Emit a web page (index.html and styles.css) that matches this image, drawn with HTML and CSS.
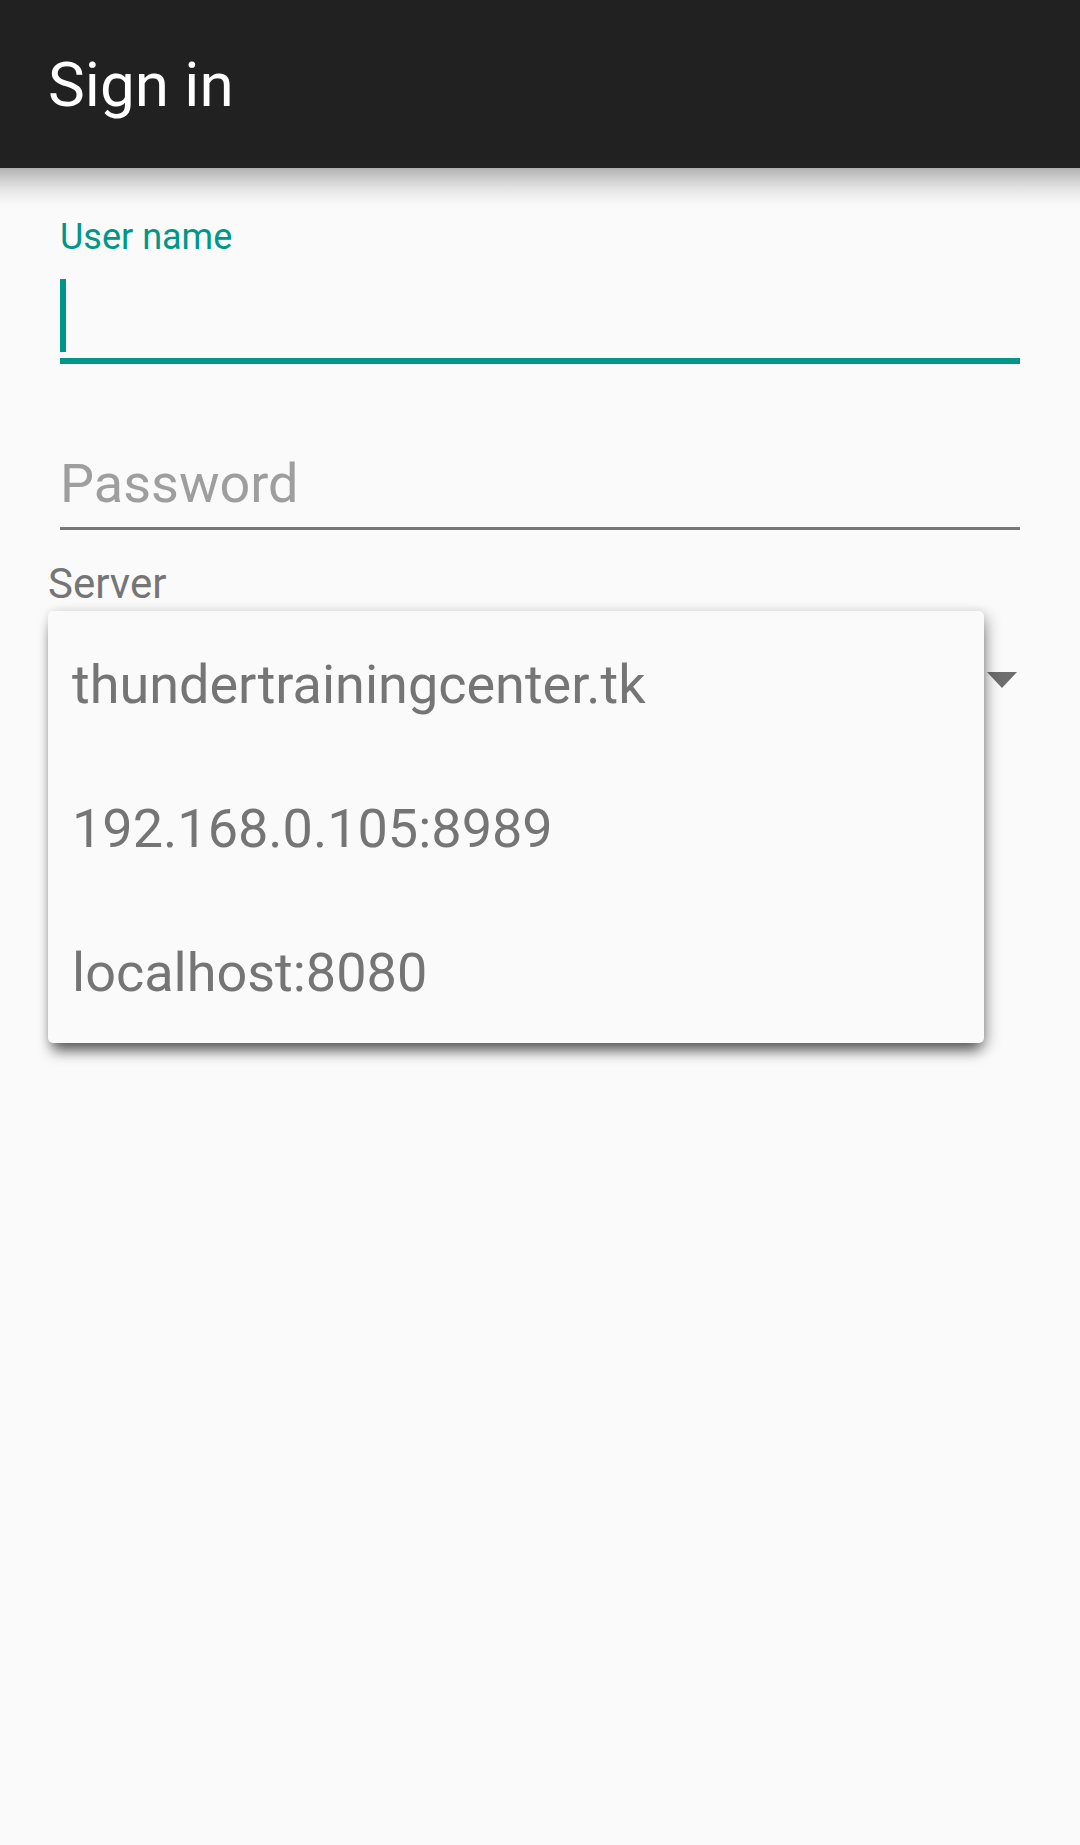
FILE: index.html
```html
<!DOCTYPE html>
<html lang="en">
<head>
<meta charset="utf-8">
<title>Sign in</title>
<link rel="stylesheet" href="styles.css">
</head>
<body>
<header class="appbar">
  <h1 class="title">Sign in</h1>
</header>
<main class="form">
  <label class="float-label">User name</label>
  <div class="field focused">
    <div class="cursor"></div>
  </div>
  <div class="field pw">
    <span class="hint">Password</span>
  </div>
  <div class="server-label">Server</div>
  <div class="spinner">
    <span class="spinner-value"></span>
    <span class="arrow"></span>
    <ul class="dropdown">
      <li class="item">thundertrainingcenter.tk</li>
      <li class="item">192.168.0.105:8989</li>
      <li class="item">localhost:8080</li>
    </ul>
  </div>
</main>
</body>
</html>
```
FILE: styles.css
```css
* { box-sizing: border-box; }
html, body {
  margin: 0;
  padding: 0;
  background: #fafafa;
  font-family: Roboto, "Noto Sans", "Liberation Sans", sans-serif;
  width: 1080px;
  height: 1845px;
  overflow: hidden;
}
.appbar {
  position: relative;
  z-index: 2;
  height: 168px;
  background: #212121;
  padding: 3px 0 0 48px;
}
.appbar::after {
  content: "";
  position: absolute;
  left: 0;
  right: 0;
  top: 168px;
  height: 38px;
  background: linear-gradient(to bottom,
    rgba(0,0,0,0.30) 0px,
    rgba(0,0,0,0.26) 3px,
    rgba(0,0,0,0.17) 12px,
    rgba(0,0,0,0.08) 22px,
    rgba(0,0,0,0.03) 31px,
    rgba(0,0,0,0) 38px);
}
.title {
  margin: 0;
  font-size: 62px;
  font-weight: 400;
  line-height: 164px;
  color: #ffffff;
}
.form {
  padding: 0 48px;
}
.float-label {
  display: block;
  margin: 45px 12px 0;
  font-size: 36px;
  line-height: 48px;
  color: #009688;
}
.field {
  margin: 0 12px;
}
.field.focused {
  padding: 18px 0 6px;
  border-bottom: 6px solid #009688;
}
.cursor {
  width: 6px;
  height: 73px;
  background: #009688;
}
.field.pw {
  margin-top: 84px;
  padding-bottom: 7px;
  border-bottom: 3px solid #777777;
}
.hint {
  display: block;
  font-size: 54px;
  line-height: 72px;
  color: #9e9e9e;
}
.server-label {
  margin-top: 30px;
  font-size: 42px;
  line-height: 48px;
  color: #757575;
}
.spinner {
  position: relative;
  height: 144px;
  display: flex;
  align-items: center;
  justify-content: space-between;
}
.spinner-value {
  padding-left: 24px;
}
.arrow {
  width: 0;
  height: 0;
  margin-right: 15px;
  border-left: 15px solid transparent;
  border-right: 15px solid transparent;
  border-top: 16px solid #6e6e6e;
}
.dropdown {
  position: absolute;
  z-index: 3;
  top: 3px;
  left: 0;
  width: 936px;
  margin: 0;
  padding: 0;
  list-style: none;
  background: #fafafa;
  border-radius: 5px;
  box-shadow: 0 12px 14px -4px rgba(0,0,0,0.55),
              6px 4px 14px rgba(0,0,0,0.18),
              0 0 8px rgba(0,0,0,0.10);
}
.item {
  height: 144px;
  padding: 2px 0 0 24px;
  font-size: 54px;
  line-height: 144px;
  color: #757575;
  white-space: nowrap;
}
```
